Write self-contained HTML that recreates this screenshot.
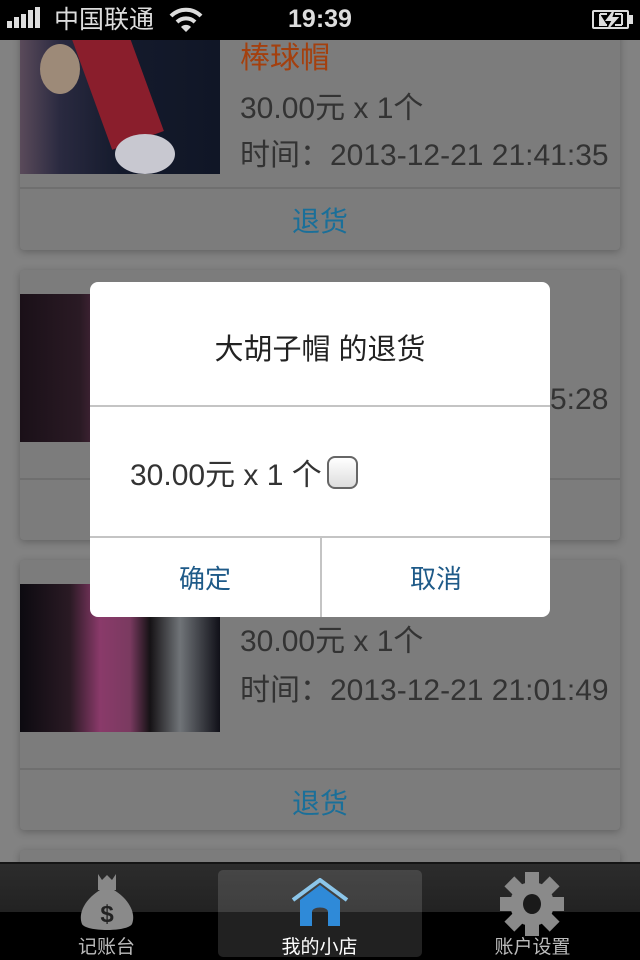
<!DOCTYPE html>
<html><head><meta charset="utf-8"><style>
*{margin:0;padding:0;box-sizing:border-box}
body{width:640px;height:960px;overflow:hidden;background:#828282;position:relative;font-family:"Liberation Sans","Noto Sans CJK SC",sans-serif}
.card{position:absolute;left:20px;width:600px;background:#7c7c7c;border-radius:4px;box-shadow:0 2px 8px rgba(0,0,0,.25)}
.img{position:absolute;left:0;width:200px;overflow:hidden}
.t{position:absolute;left:220px;font-size:30px;color:#333;white-space:nowrap;line-height:34px}
.name{color:#a4400e}
.div{position:absolute;left:0;right:0;height:2px;background:#6f6f6f}
.btn{position:absolute;left:0;right:0;text-align:center;font-size:28px;color:#1a6f99}
.sb{position:absolute;top:0;left:0;width:640px;height:40px;background:#000;color:#ddd}
.dlg{position:absolute;left:90px;top:282px;width:460px;height:335px;background:#fff;border-radius:8px;overflow:hidden}
.tab{position:absolute;left:0;top:862px;width:640px;height:98px;background:linear-gradient(#2c2c2c 0,#222 50%,#000 50%,#000);border-top:2px solid #151515}
.tl{position:absolute;top:68px;font-size:19px;color:#bbb;width:213px;text-align:center}
</style></head><body>

<div class="card" style="top:-20px;height:270px">
  <div class="img" style="top:24px;height:170px;background:linear-gradient(90deg,#5a4a5a 0,#2a2a40 20%,#141a2c 50%,#101626 100%)">
    <div style="position:absolute;left:20px;top:40px;width:40px;height:50px;border-radius:50%;background:#9d8a78"></div>
    <div style="position:absolute;left:70px;top:20px;width:55px;height:120px;background:#8a1e2c;transform:rotate(-20deg)"></div>
    <div style="position:absolute;left:95px;top:130px;width:60px;height:40px;border-radius:50%;background:#c8c8d0"></div>
  </div>
  <div class="t name" style="top:62px">棒球帽</div>
  <div class="t" style="top:112px">30.00元 x 1个</div>
  <div class="t" style="top:159px">时间：2013-12-21 21:41:35</div>
  <div class="div" style="top:207px"></div>
  <div class="btn" style="top:220px">退货</div>
</div>

<div class="card" style="top:270px;height:270px">
  <div class="img" style="top:24px;height:148px;background:linear-gradient(90deg,#1a1018 0,#2a1a24 30%,#7a3a60 55%,#201820 100%)"></div>
  <div class="t" style="top:113px;left:530px">5:28</div>
  <div class="div" style="top:208px"></div>
</div>

<div class="card" style="top:560px;height:270px">
  <div class="img" style="top:24px;height:148px;background:linear-gradient(90deg,#0c0a10 0,#2a1a24 25%,#8a3a6a 40%,#7a3a60 55%,#151215 65%,#707478 80%,#101018 100%)"></div>
  <div class="t" style="top:65px">30.00元 x 1个</div>
  <div class="t" style="top:114px">时间：2013-12-21 21:01:49</div>
  <div class="div" style="top:208px"></div>
  <div class="btn" style="top:222px">退货</div>
</div>

<div class="card" style="top:850px;height:60px"></div>

<div class="dlg">
  <div style="position:absolute;top:44px;width:100%;text-align:center;font-size:29px;color:#222">大胡子帽 的退货</div>
  <div style="position:absolute;top:123px;left:0;width:100%;height:2px;background:#c4c4c4"></div>
  <div style="position:absolute;top:168px;left:40px;font-size:30px;color:#333">30.00元 x 1 个</div>
  <div style="position:absolute;top:174px;left:237px;width:31px;height:33px;border:2px solid #666;border-radius:8px;background:linear-gradient(#fff,#ddd)"></div>
  <div style="position:absolute;top:254px;left:0;width:100%;height:2px;background:#c4c4c4"></div>
  <div style="position:absolute;top:254px;left:230px;width:2px;height:81px;background:#c4c4c4"></div>
  <div style="position:absolute;top:277px;left:0;width:230px;text-align:center;font-size:26px;color:#1e5a88">确定</div>
  <div style="position:absolute;top:277px;left:232px;width:228px;text-align:center;font-size:26px;color:#1e5a88">取消</div>
</div>

<div class="sb">
  <div style="position:absolute;left:7px;top:21px;width:5px;height:7px;background:#ddd"></div>
  <div style="position:absolute;left:14px;top:17px;width:5px;height:11px;background:#ddd"></div>
  <div style="position:absolute;left:21px;top:14px;width:5px;height:14px;background:#ddd"></div>
  <div style="position:absolute;left:28px;top:10px;width:5px;height:18px;background:#ddd"></div>
  <div style="position:absolute;left:35px;top:7px;width:5px;height:21px;background:#ddd"></div>
  <div style="position:absolute;left:54px;top:3px;font-size:25px;line-height:34px">中国联通</div>
  <svg style="position:absolute;left:168px;top:6px" width="36" height="26" viewBox="0 0 36 26"><path d="M3 10 A21 21 0 0 1 33 10" stroke="#ddd" stroke-width="4" fill="none"/><path d="M9 16 A13 13 0 0 1 27 16" stroke="#ddd" stroke-width="4" fill="none"/><path d="M13 21 L18 26 L23 21 A7 7 0 0 0 13 21Z" fill="#ddd"/></svg>
  <div style="position:absolute;left:0;width:640px;top:5px;text-align:center;font-size:25px;font-weight:bold;line-height:28px">19:39</div>
  <div style="position:absolute;left:592px;top:10px;width:37px;height:19px;border:2px solid #ddd;border-radius:2px"></div>
  <div style="position:absolute;left:629px;top:15px;width:4px;height:9px;background:#ddd"></div>
  <svg style="position:absolute;left:598px;top:12px" width="26" height="15" viewBox="0 0 26 15"><path d="M2 2 H9 M17 13 H24 M2 2 V13 H9 M24 2 V13 M17 2 H24 M15 0 L9 8 H15 L11 15 L19 6 H13Z" stroke="#ddd" stroke-width="2" fill="#ddd"/></svg>
</div>

<div class="tab">
  <div style="position:absolute;left:218px;top:6px;width:204px;height:87px;background:rgba(255,255,255,.13);border-radius:5px"></div>
  <svg style="position:absolute;left:78px;top:8px" width="58" height="60" viewBox="0 0 58 60"><path d="M20 2 L24 8 L29 3 L34 8 L38 2 L38 18 L20 18Z" fill="#888"/><path d="M22 18 L36 18 C52 28 58 42 54 52 C50 60 8 60 4 52 C0 42 6 28 22 18Z" fill="#8a8a8a"/><text x="29" y="50" text-anchor="middle" font-size="24" font-weight="bold" fill="#222" font-family="Liberation Sans">$</text></svg>
  <svg style="position:absolute;left:291px;top:14px" width="58" height="50" viewBox="0 0 58 50"><path d="M2 22 L29 2 L56 22" stroke="#8cc6ea" stroke-width="4" fill="none"/><path d="M9 22 L29 7 L49 22 L49 48 L37 48 L37 34 C37 28 21 28 21 34 L21 48 L9 48Z" fill="#2f8ad8"/></svg>
  <svg style="position:absolute;left:500px;top:8px" width="64" height="64" viewBox="0 0 64 64"><g fill="#8a8a8a"><rect x="25" y="0" width="14" height="64"/><rect x="0" y="25" width="64" height="14"/><rect x="25" y="0" width="14" height="64" transform="rotate(45 32 32)"/><rect x="25" y="0" width="14" height="64" transform="rotate(-45 32 32)"/><circle cx="32" cy="32" r="22"/></g><ellipse cx="32" cy="32" rx="9" ry="10" fill="#1a1a1a"/></svg>
  <div class="tl" style="left:0">记账台</div>
  <div class="tl" style="left:213px;color:#fff">我的小店</div>
  <div class="tl" style="left:426px">账户设置</div>
</div>
</body></html>
